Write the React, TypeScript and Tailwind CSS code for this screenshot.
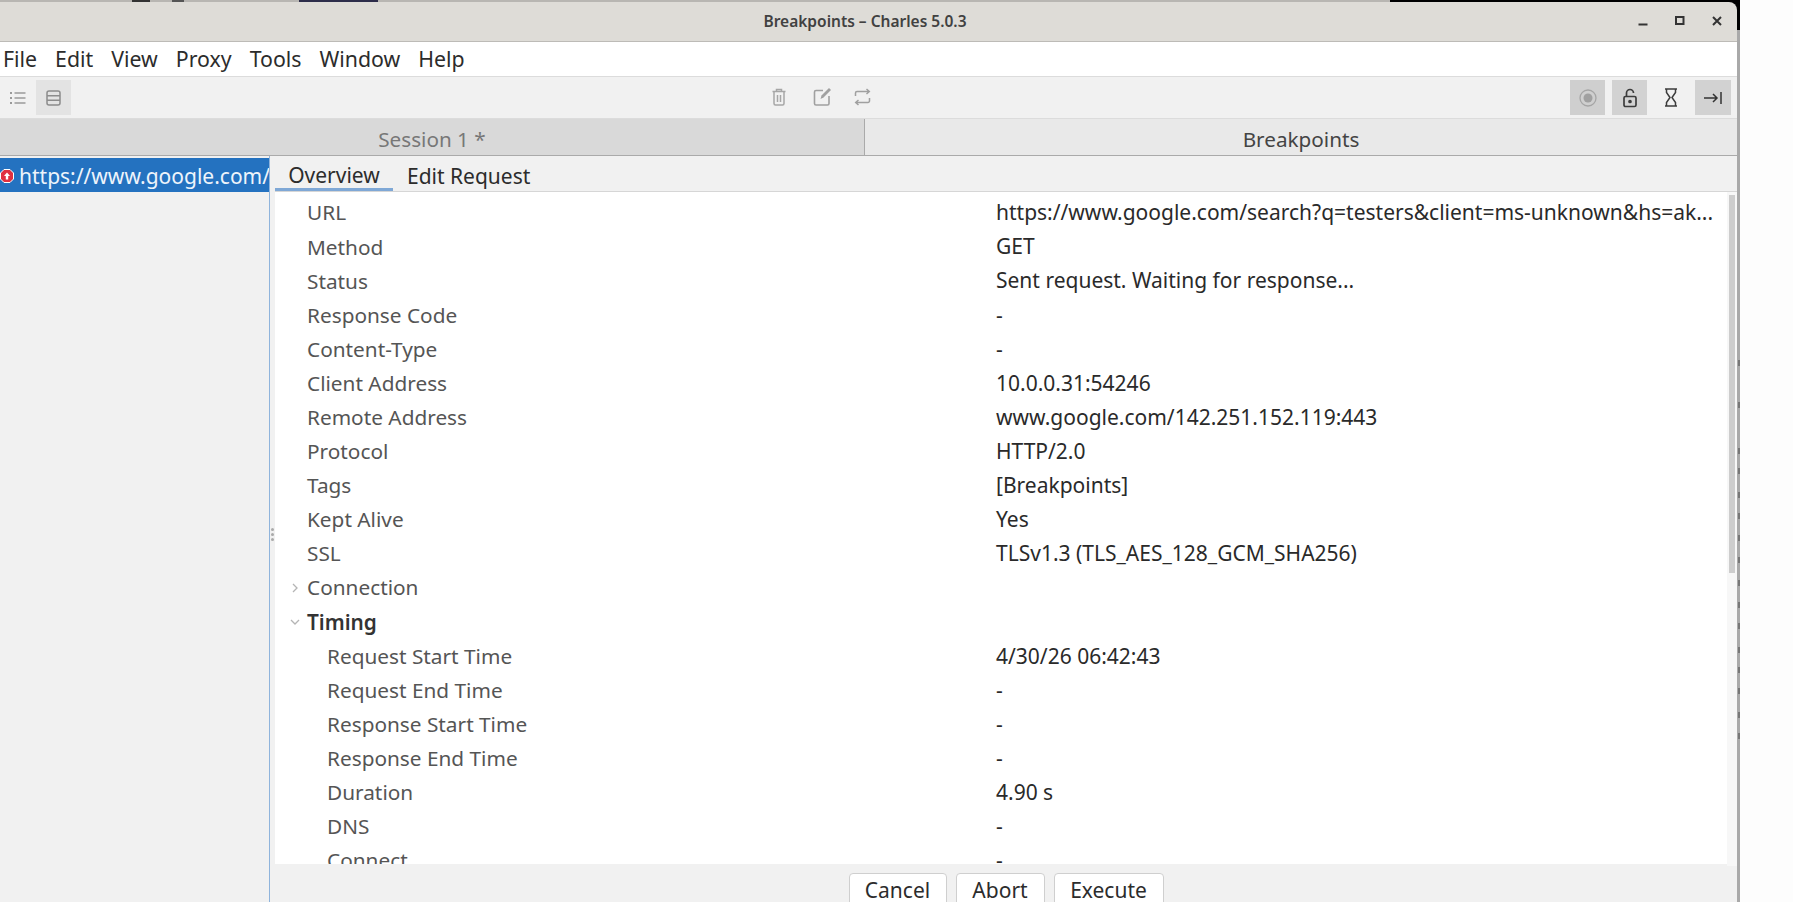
const overviewRows = [
  { label: "URL", value: "https://www.google.com/search?q=testers&client=ms-unknown&hs=ak..." },
  { label: "Method", value: "GET" },
  { label: "Status", value: "Sent request. Waiting for response..." },
  { label: "Response Code", value: "-" },
  { label: "Content-Type", value: "-" },
  { label: "Client Address", value: "10.0.0.31:54246" },
  { label: "Remote Address", value: "www.google.com/142.251.152.119:443" },
  { label: "Protocol", value: "HTTP/2.0" },
  { label: "Tags", value: "[Breakpoints]" },
  { label: "Kept Alive", value: "Yes" },
  { label: "SSL", value: "TLSv1.3 (TLS_AES_128_GCM_SHA256)" },
];

const timingRows = [
  { label: "Request Start Time", value: "4/30/26 06:42:43" },
  { label: "Request End Time", value: "-" },
  { label: "Response Start Time", value: "-" },
  { label: "Response End Time", value: "-" },
  { label: "Duration", value: "4.90 s" },
  { label: "DNS", value: "-" },
  { label: "Connect", value: "-" },
];

const edgeMarks = [360, 402, 448, 468, 492, 513, 535, 557, 580, 602, 623, 647, 667, 688, 712, 733];
const menus = ["File", "Edit", "View", "Proxy", "Tools", "Window", "Help"];

function Row({ label, value, nested }: { label: string; value: string; nested?: boolean }) {
  return (
    <div className="flex h-[34.1px] shrink-0 items-center">
      <div className={nested ? "w-[721px] pl-[52px] text-[20.8px] text-[#555]" : "w-[721px] pl-[32px] text-[20.8px] text-[#555]"}>{label}</div>
      <div className="whitespace-nowrap text-[21px] text-[#2a2a2a]">{value}</div>
    </div>
  );
}

function GroupRow({ label, open }: { label: string; open?: boolean }) {
  return (
    <div className="flex h-[34.1px] shrink-0 items-center text-[20.8px]">
      <div className="flex w-[26px] justify-end">
        <svg width="12" height="12" viewBox="0 0 12 12" fill="none" stroke="#b5b5b5" strokeWidth="1.3">
          {open ? <path d="M2 4l4 4 4-4" /> : <path d="M4 2l4 4-4 4" />}
        </svg>
      </div>
      <div className={open ? "pl-[6px] font-semibold text-[#333]" : "pl-[6px] text-[#555]"}>{label}</div>
    </div>
  );
}

export default function App() {
  return (
    <div className="flex h-[902px] w-[1793px] flex-col overflow-hidden bg-[#fdfdfd] font-['Noto_Sans',sans-serif]">
      {/* bits of the desktop behind the window */}
      <div className="flex h-[2px] shrink-0 w-[1740px] bg-[#b8b6b2]">
        <div className="ml-[132px] w-[18px] bg-[#333]" />
        <div className="ml-[22px] w-[12px] bg-[#555]" />
        <div className="ml-[115px] w-[79px] bg-[#2d2d4a]" />
        <div className="ml-[1012px] flex-1 bg-black" />
      </div>

      <div className="flex min-h-0 flex-1">
        <div className="flex w-[1737px] flex-col">
          <div className="bg-black">
            <div className="relative flex h-[40px] items-center justify-center rounded-tr-lg border-b border-[#bdbbb7] bg-[#dedcd7] pr-[7px]">
              <span className="text-[15.5px] font-semibold text-[#414141]">Breakpoints – Charles 5.0.3</span>
              <div className="absolute right-[13px] top-[12px] flex items-center gap-[23px]">
                <svg width="14" height="14" viewBox="0 0 14 14"><rect x="2.5" y="9.5" width="9" height="2" fill="#333" /></svg>
                <svg width="14" height="14" viewBox="0 0 14 14" fill="none" stroke="#333" strokeWidth="2"><rect x="3" y="3" width="7.500" height="7" /></svg>
                <svg width="14" height="14" viewBox="0 0 14 14" fill="none" stroke="#333" strokeWidth="2"><path d="M3 3l8 8M11 3l-8 8" /></svg>
              </div>
            </div>
          </div>

          <div className="flex h-[34px] items-center gap-[18px] bg-white pl-[3px] text-[21.3px] text-[#2c2c2c]">
            {menus.map((m) => (
              <span key={m}>{m}</span>
            ))}
          </div>

          <div className="flex h-[43px] items-center border-y border-[#dcdcdc] bg-[#f1f1f1] pr-[6px]">
            <div className="flex h-[35px] w-[36px] items-center justify-center">
              <svg width="18" height="16" viewBox="0 0 18 16" fill="none" stroke="#9a9a9a" strokeWidth="1.4">
                <path d="M5.5 3h11M5.5 8h11M5.5 13h11" />
                <path d="M1 3h2M1 8h2M1 13h2" strokeWidth="2.2" />
              </svg>
            </div>
            <div className="flex h-[35px] w-[35px] items-center justify-center bg-[#e3e3e3]">
              <svg width="15" height="16" viewBox="0 0 15 16" fill="none" stroke="#8c8c8c" strokeWidth="1.5">
                <rect x="1" y="1" width="13" height="14" rx="2" />
                <path d="M1 5.700h13M1 10.300h13" />
              </svg>
            </div>
            <div className="mb-[2px] ml-[700px] flex items-center">
              <svg width="16" height="18" viewBox="0 0 16 18" fill="none" stroke="#a6a6a6" strokeWidth="1.5">
                <path d="M3 4v11.500a1.500 1.500 0 001.500 1.500h7a1.500 1.500 0 001.500-1.500V4M1.500 3.500h13M5.500 3V1.500h5V3M6.500 7v7M9.500 7v7" />
              </svg>
              <svg className="ml-[26px]" width="19" height="19" viewBox="0 0 19 19" fill="none" stroke="#a0a0a0" strokeWidth="1.6">
                <path d="M10 3.500H3a1.500 1.500 0 00-1.500 1.500v11.500A1.500 1.500 0 003 18h11.500a1.500 1.500 0 001.500-1.500V9" />
                <path d="M7.500 12l1-3.500L16 1l2 2-7.500 7.500z" fill="#a0a0a0" stroke="none" />
              </svg>
              <svg className="ml-[22px]" width="17" height="18" viewBox="0 0 17 18" fill="none" stroke="#a0a0a0" strokeWidth="1.5">
                <path d="M1.500 8V5a1.500 1.500 0 011.500-1.500h12M12.500 1l2.800 2.500L12.500 6M15.500 10v3a1.500 1.500 0 01-1.500 1.500H2M4.500 12l-2.800 2.500L4.500 17" />
              </svg>
            </div>
            <div className="ml-auto flex items-center">
              <div className="flex h-[35px] w-[35px] items-center justify-center bg-[#cfcfcf]">
                <svg width="18" height="18" viewBox="0 0 18 18" fill="none">
                  <circle cx="9" cy="9" r="8" stroke="#a5a5a5" strokeWidth="1.3" />
                  <circle cx="9" cy="9" r="4.500" fill="#a0a0a0" />
                </svg>
              </div>
              <div className="ml-[7px] flex h-[35px] w-[35px] items-center justify-center bg-[#d2d2d2]">
                <svg width="16" height="20" viewBox="0 0 16 20" fill="none" stroke="#3c3c3c" strokeWidth="1.7">
                  <rect x="2" y="8.500" width="12" height="10" rx="1.500" />
                  <path d="M4.500 8.500V5a3.500 3.500 0 017 0" />
                  <circle cx="8" cy="13.500" r="1" fill="#3c3c3c" />
                </svg>
              </div>
              <div className="ml-[6px] flex h-[35px] w-[35px] items-center justify-center">
                <svg width="14" height="19" viewBox="0 0 14 19" fill="none" stroke="#3c3c3c" strokeWidth="1.5">
                  <path d="M1 1h12M1 18h12M2.500 1v3.500L6 9.500l-3.500 5V18M11.500 1v3.500L8 9.500l3.500 5V18" />
                </svg>
              </div>
              <div className="ml-[7px] flex h-[35px] w-[36px] items-center justify-center bg-[#d2d2d2]">
                <svg width="18" height="14" viewBox="0 0 18 14" fill="none" stroke="#333" strokeWidth="1.5">
                  <path d="M0 7h12.500M9 3l4 4-4 4M17 1v12" />
                </svg>
              </div>
            </div>
          </div>

          <div className="flex h-[37px] items-center border-b border-[#aaa] text-[20.7px]">
            <div className="flex h-full w-[865px] items-center justify-center border-r border-[#aaa] bg-[#d9d9d9] pt-[5px] text-[#777]">Session 1 *</div>
            <div className="flex h-full flex-1 items-center justify-center bg-[#e9e9e9] pt-[5px] text-[#444]">Breakpoints</div>
          </div>

          <div className="flex min-h-0 flex-1 bg-[#f1f1f1]">
            <div className="w-[269px] shrink-0 overflow-hidden pt-[2px]">
              <div className="flex h-[34px] items-center whitespace-nowrap bg-[#2472c0] pt-[3px] text-[21px] text-[#eef4fb]">
                <svg className="mb-[2px] shrink-0" width="14" height="14" viewBox="0 0 14 14">
                  <path d="M4 .5h6L13.500 4v6L10 13.500H4L.5 10V4z" fill="#e03040" stroke="#fff" strokeWidth="1" />
                  <path d="M7 3.500l3 3.500H8.200v3.500H5.800V7H4z" fill="#fff" />
                </svg>
                <span className="ml-[5px]">https://www.google.com/</span>
              </div>
            </div>

            <div className="flex w-[6px] shrink-0 items-center border-l border-[#8fb4dc]">
              <div className="ml-[1px] mt-[10px] flex flex-col gap-[2px]">
                <div className="size-[3px] rounded-full bg-[#aaa]" />
                <div className="size-[3px] rounded-full bg-[#aaa]" />
                <div className="size-[3px] rounded-full bg-[#aaa]" />
              </div>
            </div>

            <div className="flex min-w-0 flex-1 flex-col">
              <div className="flex h-[36px] shrink-0 items-stretch border-b border-[#d6d6d6] text-[21px] text-[#2c2c2c]">
                <div className="flex w-[118px] items-center justify-center border-b-[3px] border-[#7fa8d6] pt-[8px]">Overview</div>
                <div className="ml-[14px] flex items-center pt-[6px]">Edit Request</div>
              </div>
              <div className="flex min-h-0 flex-1">
                <div className="flex h-[672px] min-w-0 flex-1 flex-col overflow-hidden bg-white pt-[4px]">
                  {overviewRows.map((r) => (
                    <Row key={r.label} label={r.label} value={r.value} />
                  ))}
                  <GroupRow label="Connection" />
                  <GroupRow label="Timing" open />
                  {timingRows.map((r) => (
                    <Row key={r.label} label={r.label} value={r.value} nested />
                  ))}
                </div>
                <div className="flex w-[10px] shrink-0 justify-center bg-[#f7f7f7] pt-[3px]">
                  <div className="h-[378px] w-[6px] bg-[#cdcdcd]" />
                </div>
              </div>
              <div className="flex h-[36px] shrink-0 items-start justify-center gap-[9px] pt-[7px] text-[21px] text-[#2c2c2c]">
                <button className="h-[36px] w-[98px] rounded-t border border-[#cfcfcf] bg-white">Cancel</button>
                <button className="h-[36px] w-[89px] rounded-t border border-[#cfcfcf] bg-white">Abort</button>
                <button className="h-[36px] w-[110px] rounded-t border border-[#cfcfcf] bg-white">Execute</button>
              </div>
            </div>
          </div>
        </div>

        {/* window edge, with scraps of what is behind it */}
        <div className="relative w-[3px] bg-[#a9a9a9]">
          <div className="h-[28px] bg-black" />
          {edgeMarks.map((y) => (
            <div key={y} className="absolute left-[1px] h-[6px] w-[2px] bg-[#777]" style={{ top: y - 2 }} />
          ))}
        </div>
      </div>
    </div>
  );
}
